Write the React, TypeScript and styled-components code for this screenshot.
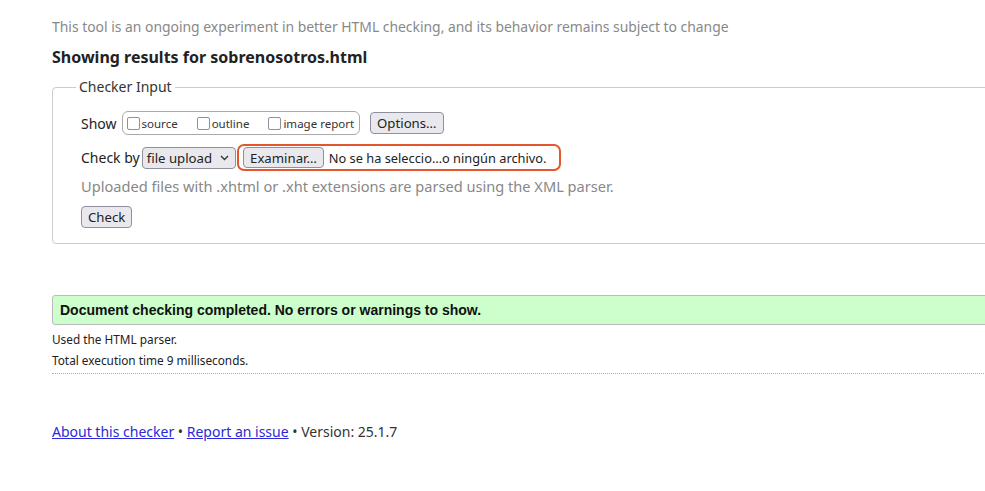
import styled, { createGlobalStyle } from "styled-components";

const GlobalStyle = createGlobalStyle`
  html, body {
    margin: 0;
    padding: 0;
    background: #fff;
    overflow: hidden;
  }
  body {
    font-family: "Noto Sans", "DejaVu Sans", sans-serif;
    color: #222;
  }
`;

const Page = styled.div`
  width: 1000px;
  padding-left: 52px;
`;

const Intro = styled.p`
  margin: 17px 0 0;
  font-size: 13.9px;
  line-height: 20px;
  color: #888;
`;

const Heading = styled.h2`
  margin: 10px 0 0;
  font-size: 16px;
  line-height: 20px;
  font-weight: bold;
  color: #222;
`;

const Fieldset = styled.fieldset`
  margin: 10px 0 0;
  padding: 0 28px 15px;
  border: 1px solid #ccc;
  border-radius: 4px;
  min-width: 0;
`;

const Legend = styled.legend`
  margin-left: -5px;
  padding: 0 3px;
  font-size: 14px;
  line-height: 20px;
  color: #333;
`;

const Row = styled.div<{ $top: number }>`
  display: flex;
  align-items: center;
  margin-top: ${(p) => p.$top}px;
  font-size: 14px;
  color: #222;
`;

const Label = styled.span<{ $gap: number }>`
  margin-right: ${(p) => p.$gap}px;
`;

const CheckGroup = styled.div`
  display: flex;
  align-items: center;
  gap: 19px;
  height: 22px;
  padding: 0 5px 0 4px;
  border: 1px solid #aaa;
  border-radius: 6px;
`;

const CheckItem = styled.label`
  display: flex;
  align-items: center;
  gap: 2px;
  font-size: 11.5px;
  color: #333;
`;

const Box = styled.span`
  display: inline-block;
  width: 11px;
  height: 11px;
  border: 1px solid #8f8f9d;
  border-radius: 2px;
  background: #fff;
`;

const Button = styled.button<{ $h?: number }>`
  height: ${(p) => p.$h ?? 22}px;
  padding: 0 6px;
  font-family: inherit;
  font-size: 13.2px;
  color: #222;
  background: #e9e9ed;
  border: 1px solid #8f8f9d;
  border-radius: 4px;
`;

const OptionsButton = styled(Button)`
  margin-left: 10px;
`;

const Select = styled.div`
  display: flex;
  align-items: center;
  gap: 8px;
  height: 20px;
  padding: 0 6px 0 4px;
  border: 1px solid #8f8f9d;
  border-radius: 4px;
  background: #e9e9ed;
  font-size: 13.2px;
`;

const FileBox = styled.div`
  display: flex;
  align-items: center;
  gap: 5px;
  height: 23px;
  margin-left: 1px;
  padding: 0 13px 0 4px;
  border: 2px solid #e4572e;
  border-radius: 7px;
  font-size: 12.8px;
`;

const Note = styled.div`
  margin-top: 5px;
  font-size: 14.6px;
  line-height: 20px;
  color: #888;
`;

const CheckRow = styled.div`
  margin-top: 9px;
`;

const Success = styled.div`
  margin-top: 51px;
  padding: 0 7px;
  height: 28px;
  display: flex;
  align-items: center;
  background: #ccffcc;
  border: 1px solid #bbb;
  border-radius: 3px;
  font-family: "Liberation Sans", Arial, sans-serif;
  font-weight: bold;
  font-size: 14px;
  color: #111;
`;

const Details = styled.div`
  padding: 6px 0 5px;
  border-bottom: 1px dotted #aaa;
`;

const Detail = styled.p`
  margin: 0;
  font-size: 11.8px;
  line-height: 16px;
  color: #222;
  & + & {
    margin-top: 5px;
  }
`;

const Footer = styled.p`
  margin: 48px 0 0;
  font-size: 14px;
  line-height: 20px;
  color: #333;
`;

const Link = styled.a`
  color: #2a2ad8;
  text-decoration: underline;
`;

const Chevron = () => (
  <svg width="9" height="6" viewBox="0 0 9 6" fill="none">
    <path d="M1 1l3.5 3.5L8 1" stroke="#333" strokeWidth="1.4" />
  </svg>
);

const checks = ["source", "outline", "image report"];

const App = () => {
  return (
    <>
      <GlobalStyle />
      <Page>
        <Intro>
          This tool is an ongoing experiment in better HTML checking, and its
          behavior remains subject to change
        </Intro>
        <Heading>Showing results for sobrenosotros.html</Heading>
        <Fieldset>
          <Legend>Checker Input</Legend>
          <Row $top={14}>
            <Label $gap={5}>Show</Label>
            <CheckGroup>
              {checks.map((c) => (
                <CheckItem key={c}>
                  <Box />
                  {c}
                </CheckItem>
              ))}
            </CheckGroup>
            <OptionsButton>Options…</OptionsButton>
          </Row>
          <Row $top={9}>
            <Label $gap={2}>Check by</Label>
            <Select>
              file upload
              <Chevron />
            </Select>
            <FileBox>
              <Button $h={21}>Examinar…</Button>
              No se ha seleccio…o ningún archivo.
            </FileBox>
          </Row>
          <Note>
            Uploaded files with .xhtml or .xht extensions are parsed using the
            XML parser.
          </Note>
          <CheckRow>
            <Button>Check</Button>
          </CheckRow>
        </Fieldset>
        <Success>Document checking completed. No errors or warnings to show.</Success>
        <Details>
          <Detail>Used the HTML parser.</Detail>
          <Detail>Total execution time 9 milliseconds.</Detail>
        </Details>
        <Footer>
          <Link href="#">About this checker</Link> •{" "}
          <Link href="#">Report an issue</Link> • Version: 25.1.7
        </Footer>
      </Page>
    </>
  );
};

export default App;
